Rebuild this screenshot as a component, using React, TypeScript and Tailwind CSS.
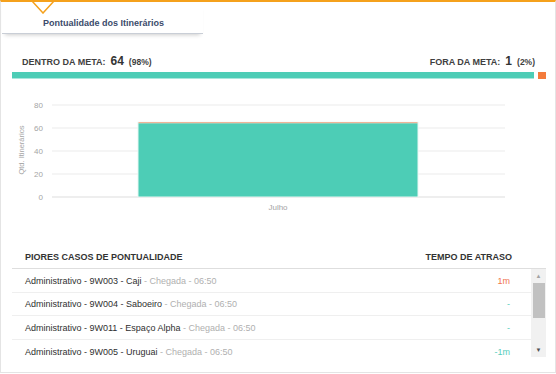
import React from 'react';

const rows = [
  { name: 'Administrativo - 9W003 - Caji', info: 'Chegada - 06:50', delay: '1m', late: true },
  { name: 'Administrativo - 9W004 - Saboeiro', info: 'Chegada - 06:50', delay: '-', late: false },
  { name: 'Administrativo - 9W011 - Espaço Alpha', info: 'Chegada - 06:50', delay: '-', late: false },
  { name: 'Administrativo - 9W005 - Uruguai', info: 'Chegada - 06:50', delay: '-1m', late: false },
];

const ticks = [80, 60, 40, 20, 0];

function Chart() {
  // y of 0 line = 103, 23px per 20 units
  const y0 = 103;
  const scale = 23 / 20;
  const inside = 64;
  const outside = 1;
  const topOut = y0 - (inside + outside) * scale;
  const topIn = y0 - inside * scale;
  return (
    <svg width="533" height="120" className="block" style={{ fontFamily: '"Liberation Sans", Arial, sans-serif' }}>
      {ticks.map((t) => {
        const y = y0 - t * scale;
        return (
          <g key={t}>
            <line x1="40" x2="493" y1={y} y2={y} stroke={t === 0 ? '#e8e8e8' : '#f2f2f2'} strokeWidth="1.5" />
            <text x="31" y={y + 3} textAnchor="end" fontSize="8" fill="#a5a5a5">
              {t}
            </text>
          </g>
        );
      })}
      <rect x="125.5" y={topOut - 0.5} width="281" height={y0 - topOut + 0.5} fill="#e6f7f3" />
      <rect x="126.5" y={topOut} width="279" height={topIn - topOut} fill="#f2a07c" />
      <rect x="126.5" y={topIn} width="279" height={y0 - topIn - 0.5} fill="#4dcdb6" />
      <text x="266" y="116" textAnchor="middle" fontSize="8" fill="#a5a5a5">
        Julho
      </text>
      <text x="0" y="0" transform="translate(12 56) rotate(-90)" textAnchor="middle" fontSize="7.5" fill="#a5a5a5">
        Qtd. Itinerários
      </text>
    </svg>
  );
}

export default function App() {
  return (
    <div
      className="relative w-[556px] h-[373px] bg-white border-t-2 border-t-[#f5a11c] border-l border-r border-b border-[#e4e4e4] overflow-hidden"
      style={{ fontFamily: '"Liberation Sans", Arial, sans-serif' }}
    >
      {/* pointer notch */}
      <svg width="24" height="14" className="absolute left-[30px] top-[-2px]">
        <polyline points="1,1 12,13 23,1" fill="#ffffff" stroke="#f5a11c" strokeWidth="1.5" />
      </svg>

      {/* Tab */}
      <div className="ml-[1px] w-[201px] h-[32px] flex items-end pb-[4px] pl-[41px] border-b border-[#c9ced6] shadow-[0_4px_4px_-3px_rgba(0,0,0,0.2)]">
        <span className="text-[9px] leading-[11px] font-bold text-[#3b4b6b]">Pontualidade dos Itinerários</span>
      </div>

      <div className="pl-[11px] pr-[9px]">
        {/* Meta labels */}
        <div className="mt-[20px] h-[14px] flex justify-between items-baseline pl-[10px] pr-[11px] text-[#3f3f3f] leading-[14px]">
          <div className="flex items-baseline">
            <span className="text-[9px] font-bold">DENTRO DA META:</span>
            <span className="text-[12px] font-bold ml-[5px] text-[#333]">64</span>
            <span className="text-[8.5px] font-bold ml-[5px]">(98%)</span>
          </div>
          <div className="flex items-baseline">
            <span className="text-[9px] font-bold">FORA DA META:</span>
            <span className="text-[12px] font-bold ml-[5px] text-[#333]">1</span>
            <span className="text-[8.5px] font-bold ml-[5px]">(2%)</span>
          </div>
        </div>

        {/* Progress bar */}
        <div className="mt-[4px] flex gap-[4px]">
          <div className="flex-1 h-[7px] bg-[#4dcdb6] border-b border-[#a9e7dc]" />
          <div className="w-[8px] h-[7px] bg-[#f47b3c]" />
        </div>

        {/* Chart */}
        <div className="mt-[15px]">
          <Chart />
        </div>

        {/* Table header */}
        <div className="mt-[31px] h-[24px] flex items-center justify-between pl-[13px] pr-[34px] pt-[2px] border-b-[1.5px] border-[#dedede]">
          <span className="text-[9px] font-bold text-[#333]">PIORES CASOS DE PONTUALIDADE</span>
          <span className="text-[9px] font-bold text-[#333]">TEMPO DE ATRASO</span>
        </div>

        {/* List + scrollbar */}
        <div className="flex h-[88px]">
          <div className="flex-1 overflow-hidden">
            {rows.map((r, i) => (
              <div
                key={i}
                className="h-[23.5px] flex items-center justify-between pl-[13px] pr-[21px] pt-[2px] border-b border-[#efefef] text-[9px] leading-[11px] last:border-b-0"
              >
                <span>
                  <span className="text-[#2f2f2f]">{r.name}</span>
                  <span className="text-[#b0b0b0]"> - {r.info}</span>
                </span>
                <span className={r.late ? 'text-[#f0744f]' : 'text-[#56cdbd]'}>{r.delay}</span>
              </div>
            ))}
          </div>
          <div className="w-[15px] bg-[#f1f1f1] flex flex-col items-center">
            <div className="h-[14px] flex items-center justify-center text-[6px] leading-none text-[#a3a3a3]">▲</div>
            <div className="w-[12px] h-[35px] bg-[#c1c1c1]" />
            <div className="flex-1" />
            <div className="h-[14px] flex items-center justify-center text-[6px] leading-none text-[#505050]">▼</div>
          </div>
        </div>
      </div>
    </div>
  );
}
